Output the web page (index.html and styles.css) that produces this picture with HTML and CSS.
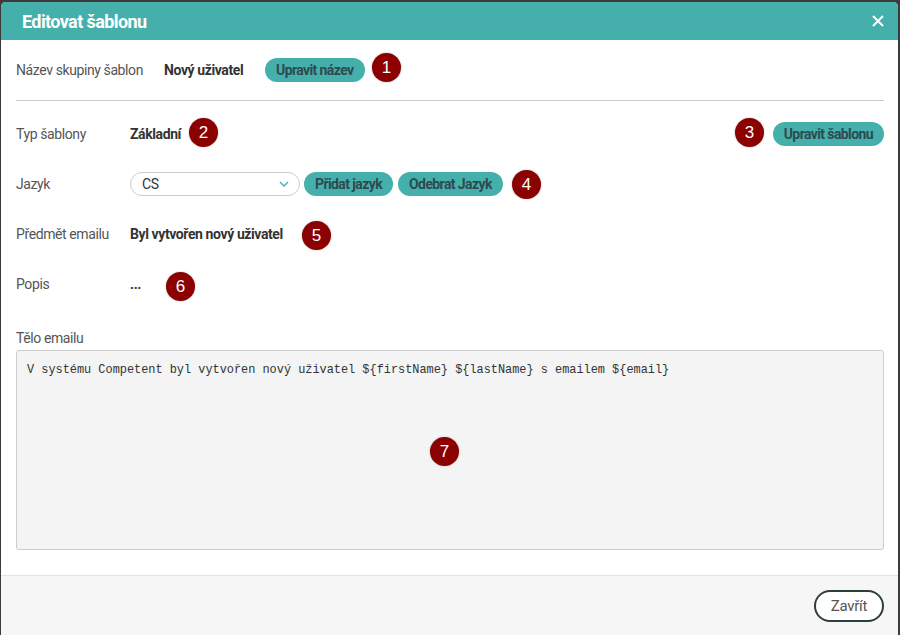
FILE: index.html
```html
<!DOCTYPE html>
<html lang="cs">
<head>
<meta charset="utf-8">
<link rel="stylesheet" href="styles.css">
</head>
<body>
<div class="dialog">
  <div class="header">
    <h1 class="title">Editovat šablonu</h1>
    <svg class="close" width="12" height="12" viewBox="0 0 12 12"><path d="M1 1l10 10M11 1L1 11" stroke="#fff" stroke-width="2"/></svg>
  </div>
  <div class="content">
    <div class="row row-first">
      <span class="label">Název skupiny šablon</span>
      <span class="value value-first">Nový uživatel</span>
      <button class="btn">Upravit název</button>
    </div>
    <hr class="divider">
    <div class="row">
      <span class="label">Typ šablony</span>
      <span class="value">Základní</span>
      <button class="btn btn-right">Upravit šablonu</button>
    </div>
    <div class="row">
      <span class="label">Jazyk</span>
      <div class="select"><span>CS</span>
        <svg class="chev" width="10" height="6" viewBox="0 0 10 6"><path d="M1 1l4 4 4-4" fill="none" stroke="#45b0ab" stroke-width="1.4"/></svg>
      </div>
      <button class="btn">Přidat jazyk</button>
      <button class="btn">Odebrat Jazyk</button>
    </div>
    <div class="row">
      <span class="label">Předmět emailu</span>
      <span class="value">Byl vytvořen nový uživatel</span>
    </div>
    <div class="row">
      <span class="label">Popis</span>
      <span class="value">...</span>
    </div>
    <div class="body-label">Tělo emailu</div>
    <div class="textarea">V systému Competent byl vytvořen nový uživatel ${firstName} ${lastName} s emailem ${email}</div>
  </div>
  <div class="footer">
    <button class="btn-close">Zavřít</button>
  </div>
  <span class="badge b1">1</span>
  <span class="badge b2">2</span>
  <span class="badge b3">3</span>
  <span class="badge b4">4</span>
  <span class="badge b5">5</span>
  <span class="badge b6">6</span>
  <span class="badge b7">7</span>
</div>
</body>
</html>
```
FILE: styles.css
```css
html, body {
  margin: 0;
  padding: 0;
  background: #3b3b3b;
  height: 635px;
  overflow: hidden;
}
body {
  font-family: Roboto, "Liberation Sans", sans-serif;
  font-size: 14px;
  color: #555;
}
.dialog {
  position: relative;
  margin: 2px 2px 0 1px;
  height: 633px;
  background: #fff;
  border-radius: 5px 5px 0 0;
  display: flex;
  flex-direction: column;
  overflow: hidden;
}
.header {
  background: #45b0ab;
  height: 38px;
  display: flex;
  align-items: center;
  justify-content: space-between;
  padding: 0 14px 0 21px;
  flex-shrink: 0;
}
.title {
  margin: 0;
  font-size: 18px;
  font-weight: 700;
  color: #fff;
  letter-spacing: -0.6px;
}
.content {
  flex: 1;
  padding: 0 14px 0 15px;
  display: flex;
  flex-direction: column;
}
.row {
  display: flex;
  align-items: center;
  height: 50px;
  letter-spacing: -0.4px;
}
.row-first {
  height: 58px;
  margin-top: 1px;
}
.label {
  width: 114px;
  flex-shrink: 0;
}
.row-first .label { width: 148px; }
.value {
  font-weight: 700;
  color: #333;
}
.value-first { width: 101px; }
.divider {
  border: 0;
  border-top: 1px solid #ccc;
  margin: 1px 0 8px;
}
.btn {
  background: #45b0ab;
  border: 0;
  border-radius: 12px;
  height: 24px;
  padding: 0 11px;
  font-family: Roboto, "Liberation Sans", sans-serif;
  font-size: 14px;
  font-weight: 700;
  color: #2e4a4f;
  letter-spacing: -0.6px;
  margin-right: 5px;
}
.btn-right { margin-left: auto; margin-right: 0; }
.select {
  width: 170px;
  height: 24px;
  border: 1px solid #ccc;
  border-radius: 12px;
  box-sizing: border-box;
  display: flex;
  align-items: center;
  justify-content: space-between;
  padding: 0 10px 0 11px;
  color: #333;
  margin-right: 4px;
}
.body-label {
  margin-top: 21px;
  height: 20px;
  letter-spacing: -0.4px;
}
.textarea {
  height: 200px;
  box-sizing: border-box;
  background: #f4f4f4;
  border: 1px solid #ccc;
  border-radius: 3px;
  padding: 12px 10px;
  font-family: "Liberation Mono", monospace;
  font-size: 11.9px;
  color: #333;
}
.footer {
  height: 59px;
  flex-shrink: 0;
  margin-top: 24px;
  background: #f6f6f6;
  border-top: 1px solid #e2e2e2;
  display: flex;
  align-items: center;
  justify-content: flex-end;
  padding-right: 14px;
}
.btn-close {
  height: 32px;
  padding: 0 15px;
  border: 2px solid #2d3e40;
  border-radius: 16px;
  background: #fff;
  font-family: Roboto, "Liberation Sans", sans-serif;
  font-size: 15px;
  color: #555;
  letter-spacing: -0.3px;
}
.badge {
  position: absolute;
  width: 29px;
  height: 29px;
  border-radius: 50%;
  background: #8b0000;
  color: #fff;
  font-family: "Liberation Sans", sans-serif;
  font-size: 17px;
  display: flex;
  align-items: center;
  justify-content: center;
  box-shadow: 0 0 2px rgba(0,0,0,0.3);
}
.b1 { left: 371px; top: 51px; }
.b2 { left: 188px; top: 116px; }
.b3 { left: 734px; top: 116px; }
.b4 { left: 511px; top: 168px; }
.b5 { left: 301px; top: 219px; }
.b6 { left: 165px; top: 270px; }
.b7 { left: 429px; top: 435px; }
```
